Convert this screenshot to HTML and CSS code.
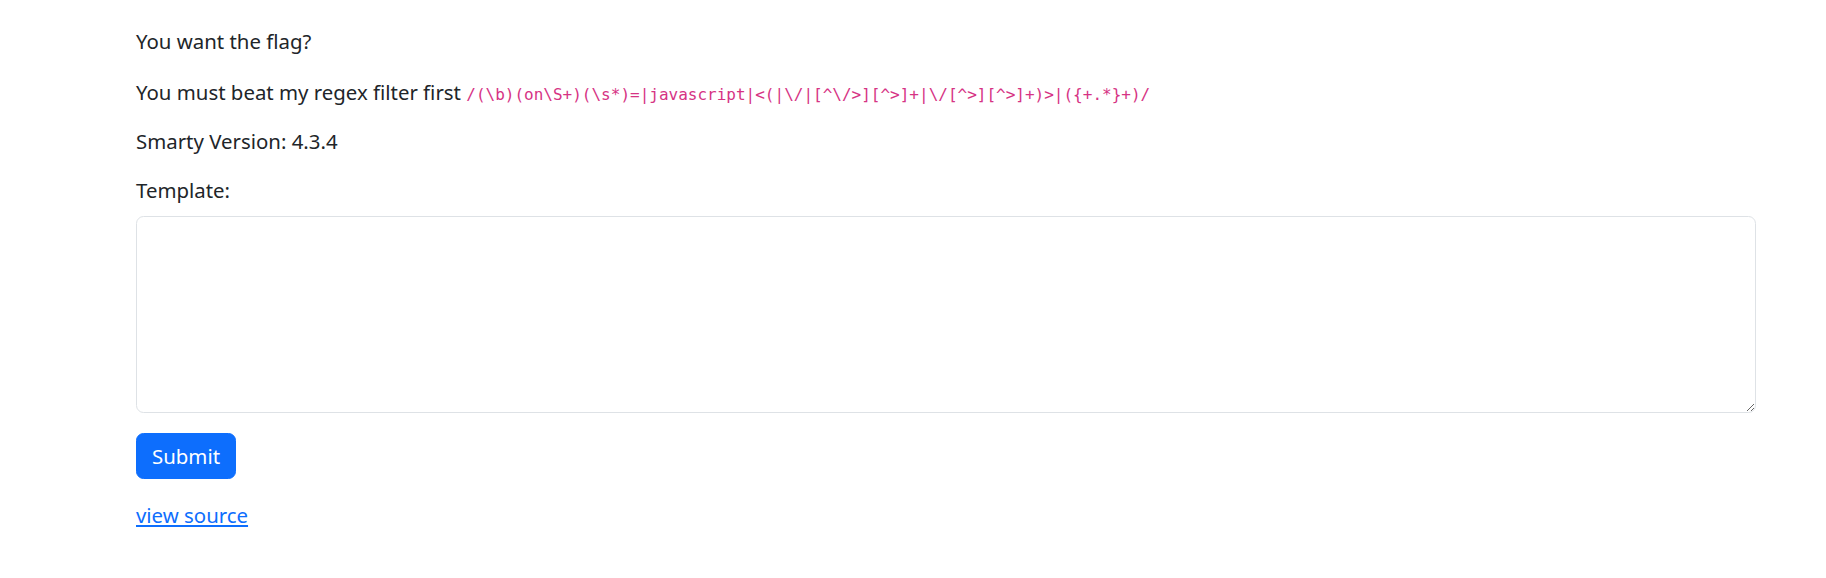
FILE: index.html
```html
<!DOCTYPE html>
<html lang="en">
<head>
<meta charset="utf-8">
<title>Smarty</title>
<link rel="stylesheet" href="styles.css">
</head>
<body>
<div class="container">
  <p class="lead-line">You want the flag?</p>
  <p>You must beat my regex filter first <code>/(\b)(on\S+)(\s*)=|javascript|&lt;(|\/|[^\/&gt;][^&gt;]+|\/[^&gt;][^&gt;]+)&gt;|({+.*}+)/</code></p>
  <p>Smarty Version: 4.3.4</p>
  <form class="form">
    <div class="field">
      <label class="label" for="tpl">Template:</label>
      <textarea class="textarea" id="tpl" name="data"></textarea>
    </div>
    <button type="button" class="btn">Submit</button>
  </form>
  <a class="link" href="#">view source</a>
</div>
</body>
</html>
```
FILE: styles.css
```css
* { box-sizing: border-box; }
html, body { margin: 0; padding: 0; background: #fff; }
body {
  font-family: "Noto Sans", "Open Sans", sans-serif;
  font-size: 20.4px;
  line-height: 30px;
  color: #212529;
}
.container {
  width: 1756px;
  padding: 26px 0 0 136px;
}
p { margin: 0 0 19px; }
.lead-line { margin-bottom: 21px; }
code {
  font-family: "DejaVu Sans Mono", "Liberation Mono", monospace;
  font-size: 16px;
  line-height: 1;
  color: #d63384;
}
.form { margin: 0 0 21px; }
.field { margin-bottom: 20px; }
.label { display: inline-block; margin-bottom: 11px; }
.textarea {
  display: block;
  width: 100%;
  height: 197px;
  border: 1px solid #dee2e6;
  border-radius: 7.5px;
  padding: 7.5px 15px;
  font: inherit;
  color: #212529;
  background: #fff;
}
.btn {
  display: inline-block;
  font: inherit;
  color: #fff;
  background: #0d6efd;
  border: 1px solid #0d6efd;
  border-radius: 7.5px;
  padding: 7px 15px;
  line-height: 30px;
  cursor: pointer;
}
.link { color: #0d6efd; text-decoration: underline; }
```
